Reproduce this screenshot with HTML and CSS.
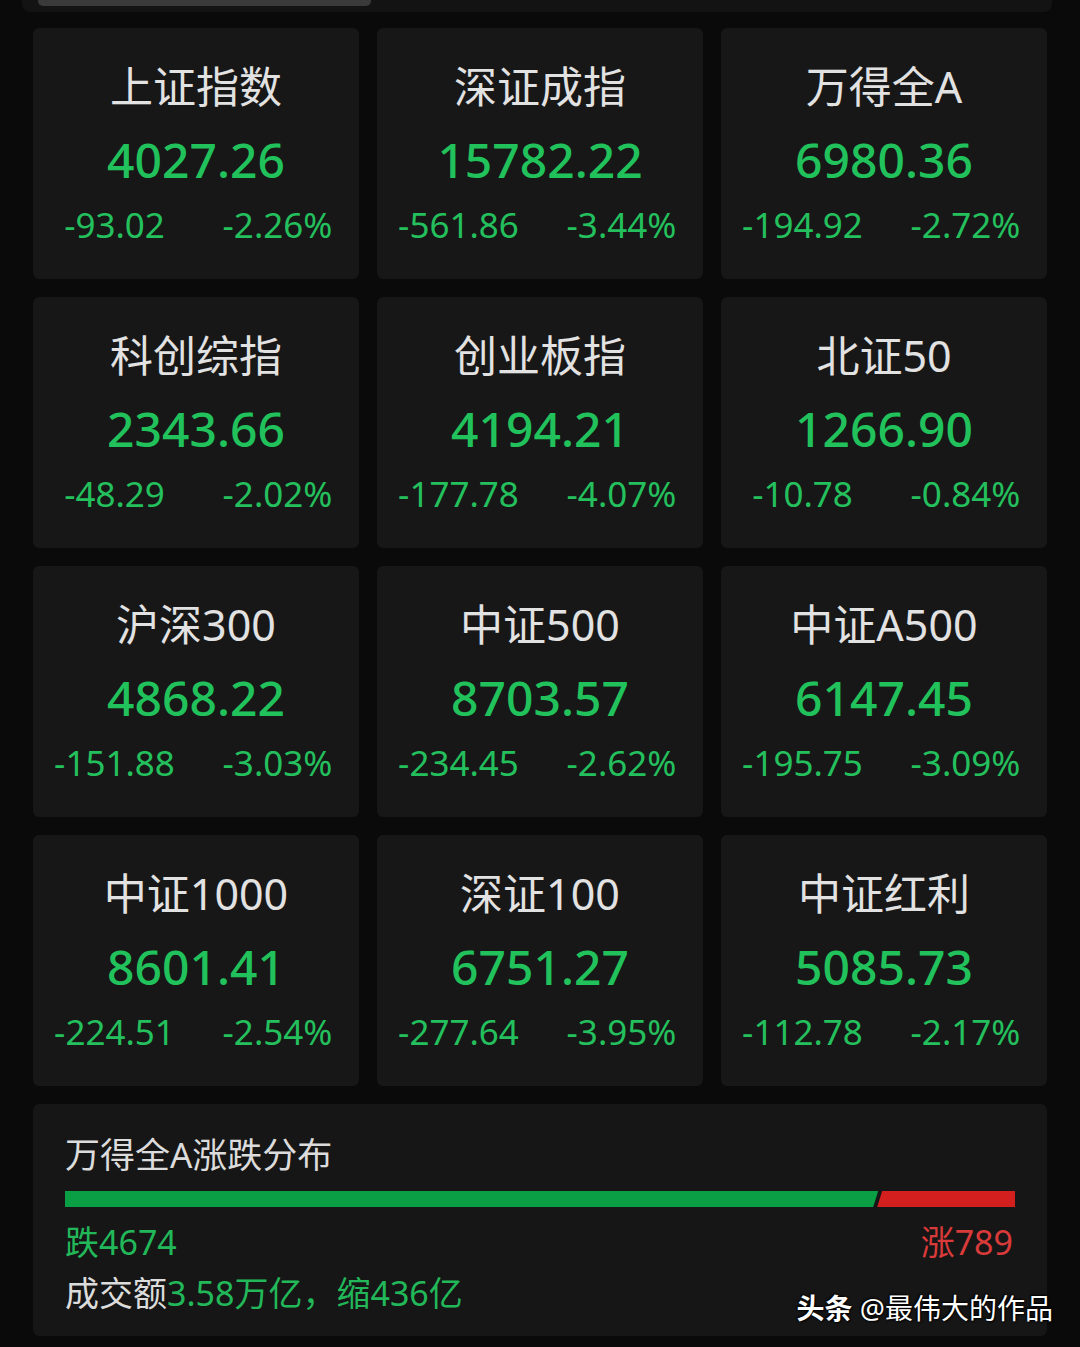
FILE: index.html
```html
<!DOCTYPE html>
<html lang="zh-CN">
<head>
    <meta charset="UTF-8">
    <meta name="viewport" content="width=device-width, initial-scale=1.0">
    <title>指数行情</title>
    <link rel="stylesheet" href="styles.css">
</head>
<body>

    <div class="pagina">
        <!-- resto do painel de cima -->
        <div class="topo">
            <div class="aba"></div>
        </div>

        <div class="grade">
            <div class="cartao">
                <div class="nome">上证指数</div>
                <div class="valor">4027.26</div>
                <div class="variacao"><span>-93.02</span><span>-2.26%</span></div>
            </div>
            <div class="cartao">
                <div class="nome">深证成指</div>
                <div class="valor">15782.22</div>
                <div class="variacao"><span>-561.86</span><span>-3.44%</span></div>
            </div>
            <div class="cartao">
                <div class="nome">万得全A</div>
                <div class="valor">6980.36</div>
                <div class="variacao"><span>-194.92</span><span>-2.72%</span></div>
            </div>

            <div class="cartao">
                <div class="nome">科创综指</div>
                <div class="valor">2343.66</div>
                <div class="variacao"><span>-48.29</span><span>-2.02%</span></div>
            </div>
            <div class="cartao">
                <div class="nome">创业板指</div>
                <div class="valor">4194.21</div>
                <div class="variacao"><span>-177.78</span><span>-4.07%</span></div>
            </div>
            <div class="cartao">
                <div class="nome">北证50</div>
                <div class="valor">1266.90</div>
                <div class="variacao"><span>-10.78</span><span>-0.84%</span></div>
            </div>

            <div class="cartao">
                <div class="nome">沪深300</div>
                <div class="valor">4868.22</div>
                <div class="variacao"><span>-151.88</span><span>-3.03%</span></div>
            </div>
            <div class="cartao">
                <div class="nome">中证500</div>
                <div class="valor">8703.57</div>
                <div class="variacao"><span>-234.45</span><span>-2.62%</span></div>
            </div>
            <div class="cartao">
                <div class="nome">中证A500</div>
                <div class="valor">6147.45</div>
                <div class="variacao"><span>-195.75</span><span>-3.09%</span></div>
            </div>

            <div class="cartao">
                <div class="nome">中证1000</div>
                <div class="valor">8601.41</div>
                <div class="variacao"><span>-224.51</span><span>-2.54%</span></div>
            </div>
            <div class="cartao">
                <div class="nome">深证100</div>
                <div class="valor">6751.27</div>
                <div class="variacao"><span>-277.64</span><span>-3.95%</span></div>
            </div>
            <div class="cartao">
                <div class="nome">中证红利</div>
                <div class="valor">5085.73</div>
                <div class="variacao"><span>-112.78</span><span>-2.17%</span></div>
            </div>
        </div>

        <!-- distribuição de altas e baixas -->
        <div class="distribuicao">
            <div class="titulo">万得全A涨跌分布</div>
            <div class="barra">
                <div class="baixa" style="width: 85.6%"></div>
                <div class="alta"></div>
            </div>
            <div class="contagem">
                <span class="verde">跌4674</span>
                <span class="vermelho">涨789</span>
            </div>
            <div class="volume">成交额<span class="verde">3.58万亿，缩436亿</span></div>

            <div class="marca"><b>头条</b> @最伟大的作品</div>
        </div>
    </div>

</body>
</html>
```

FILE: styles.css
```css
body {
    margin: 0;
    background-color: #0a0a0a;
    font-family: "Noto Sans", "Noto Sans CJK SC", sans-serif;
}
.pagina {
    width: 1080px;
    height: 1347px;
    overflow: hidden;
}
.topo {
    height: 12px;
    margin: 0 28px 16px 22px;
    background-color: #131313;
    border-radius: 0 0 8px 8px;
}
.aba {
    width: 333px;
    height: 6px;
    margin-left: 16px;
    background-color: #3a3a3a;
    border-radius: 0 0 5px 5px;
}
.grade {
    display: grid;
    grid-template-columns: repeat(3, 326px);
    grid-auto-rows: 251px;
    gap: 18px;
    padding-left: 33px;
}
.cartao {
    background-color: #171717;
    border-radius: 6px;
    padding-top: 34px;
    text-align: center;
}
.nome {
    font-size: 43px;
    line-height: 50px;
    color: #e2e2e2;
}
.valor {
    margin-top: 20px;
    font-size: 48px;
    line-height: 56px;
    font-weight: 500;
    color: #21c25c;
}
.variacao {
    margin-top: 15px;
    display: grid;
    grid-template-columns: 1fr 1fr;
    font-size: 35px;
    line-height: 44px;
    color: #24c05d;
}
.distribuicao {
    position: relative;
    margin: 18px 0 0 33px;
    width: 1014px;
    height: 232px;
    box-sizing: border-box;
    padding: 31px 32px 0 32px;
    background-color: #161616;
    border-radius: 6px;
}
.titulo {
    font-size: 35px;
    line-height: 40px;
    color: #dcdcdc;
}
.barra {
    display: flex;
    height: 16px;
    margin-top: 16px;
}
.baixa {
    background-color: #0b9f45;
    clip-path: polygon(0 0, 100% 0, calc(100% - 5px) 100%, 0 100%);
}
.alta {
    flex: 1;
    margin-left: -1px;
    background-color: #d41f1f;
    clip-path: polygon(5px 0, 100% 0, 100% 100%, 0 100%);
}
.contagem {
    display: flex;
    justify-content: space-between;
    margin-top: 15px;
    font-size: 34px;
    line-height: 40px;
}
.volume {
    margin-top: 11px;
    font-size: 34px;
    line-height: 40px;
    color: #dcdcdc;
}
.verde {
    color: #22b85a;
}
.vermelho {
    color: #d93a3a;
    margin-right: 2px;
}
.marca {
    position: absolute;
    right: -6px;
    bottom: 12px;
    font-size: 28px;
    line-height: 32px;
    color: #ffffff;
    text-shadow: 1px 1px 2px #000, -1px -1px 2px #000;
}
.marca b {
    font-weight: 700;
}
```
